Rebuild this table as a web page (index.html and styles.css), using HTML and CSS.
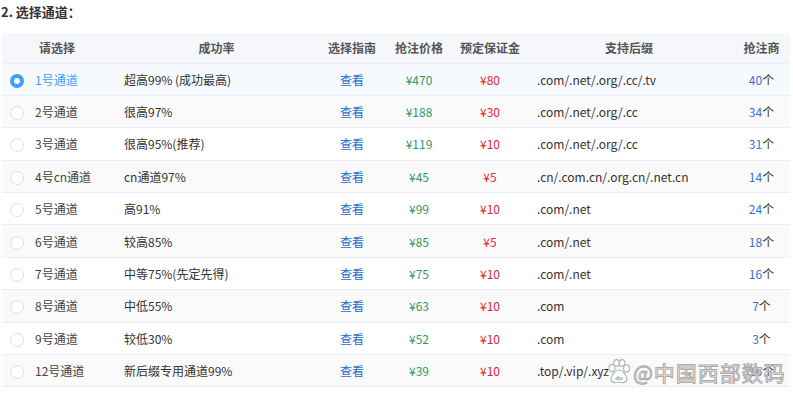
FILE: index.html
```
<!DOCTYPE html>
<html lang="zh">

<head>
    <meta charset="utf-8">
    <title>选择通道</title>
    <link rel="stylesheet" href="styles.css">
</head>

<body>
    <h3 class="titel">2. 选择通道：</h3>

    <table class="kanaler">
        <colgroup>
            <col style="width:110px">
            <col style="width:209px">
            <col style="width:62px">
            <col style="width:72px">
            <col style="width:70px">
            <col style="width:208px">
            <col style="width:57px">
        </colgroup>
        <thead>
            <tr>
                <th>请选择</th>
                <th>成功率</th>
                <th>选择指南</th>
                <th>抢注价格</th>
                <th>预定保证金</th>
                <th>支持后缀</th>
                <th>抢注商</th>
            </tr>
        </thead>
        <tbody>
            <tr class="valgt">
                <td class="vaelg"><span class="radio on"></span>1号通道</td>
                <td class="venstre">超高99% (成功最高)</td>
                <td><a href="#">查看</a></td>
                <td class="pris">¥470</td>
                <td class="depo">¥80</td>
                <td class="venstre">.com/.net/.org/.cc/.tv</td>
                <td><span class="antal">40</span>个</td>
            </tr>
            <tr>
                <td class="vaelg"><span class="radio"></span>2号通道</td>
                <td class="venstre">很高97%</td>
                <td><a href="#">查看</a></td>
                <td class="pris">¥188</td>
                <td class="depo">¥30</td>
                <td class="venstre">.com/.net/.org/.cc</td>
                <td><span class="antal">34</span>个</td>
            </tr>
            <tr>
                <td class="vaelg"><span class="radio"></span>3号通道</td>
                <td class="venstre">很高95%(推荐)</td>
                <td><a href="#">查看</a></td>
                <td class="pris">¥119</td>
                <td class="depo">¥10</td>
                <td class="venstre">.com/.net/.org/.cc</td>
                <td><span class="antal">31</span>个</td>
            </tr>
            <tr>
                <td class="vaelg"><span class="radio"></span>4号cn通道</td>
                <td class="venstre">cn通道97%</td>
                <td><a href="#">查看</a></td>
                <td class="pris">¥45</td>
                <td class="depo">¥5</td>
                <td class="venstre">.cn/.com.cn/.org.cn/.net.cn</td>
                <td><span class="antal">14</span>个</td>
            </tr>
            <tr>
                <td class="vaelg"><span class="radio"></span>5号通道</td>
                <td class="venstre">高91%</td>
                <td><a href="#">查看</a></td>
                <td class="pris">¥99</td>
                <td class="depo">¥10</td>
                <td class="venstre">.com/.net</td>
                <td><span class="antal">24</span>个</td>
            </tr>
            <tr>
                <td class="vaelg"><span class="radio"></span>6号通道</td>
                <td class="venstre">较高85%</td>
                <td><a href="#">查看</a></td>
                <td class="pris">¥85</td>
                <td class="depo">¥5</td>
                <td class="venstre">.com/.net</td>
                <td><span class="antal">18</span>个</td>
            </tr>
            <tr>
                <td class="vaelg"><span class="radio"></span>7号通道</td>
                <td class="venstre">中等75%(先定先得)</td>
                <td><a href="#">查看</a></td>
                <td class="pris">¥75</td>
                <td class="depo">¥10</td>
                <td class="venstre">.com/.net</td>
                <td><span class="antal">16</span>个</td>
            </tr>
            <tr>
                <td class="vaelg"><span class="radio"></span>8号通道</td>
                <td class="venstre">中低55%</td>
                <td><a href="#">查看</a></td>
                <td class="pris">¥63</td>
                <td class="depo">¥10</td>
                <td class="venstre">.com</td>
                <td><span class="antal">7</span>个</td>
            </tr>
            <tr>
                <td class="vaelg"><span class="radio"></span>9号通道</td>
                <td class="venstre">较低30%</td>
                <td><a href="#">查看</a></td>
                <td class="pris">¥52</td>
                <td class="depo">¥10</td>
                <td class="venstre">.com</td>
                <td><span class="antal">3</span>个</td>
            </tr>
            <tr>
                <td class="vaelg"><span class="radio"></span>12号通道</td>
                <td class="venstre">新后缀专用通道99%</td>
                <td><a href="#">查看</a></td>
                <td class="pris">¥39</td>
                <td class="depo">¥10</td>
                <td class="venstre">.top/.vip/.xyz</td>
                <td><span class="antal">16</span>个</td>
            </tr>
        </tbody>
    </table>

    <!-- vandmaerke -->
    <div class="maerke">
        <svg width="24" height="26" viewBox="0 0 24 26">
            <g fill="rgba(255,255,255,0.6)" stroke="#b5b5b5" stroke-width="1.2">
                <ellipse cx="5" cy="9" rx="3" ry="3.6" />
                <ellipse cx="9.5" cy="4" rx="2.8" ry="3.4" />
                <ellipse cx="15" cy="4" rx="2.8" ry="3.4" />
                <ellipse cx="19.5" cy="9.5" rx="3" ry="3.6" />
                <path d="M12 11 C8 11 4 17 4 20 C4 24 8 24 12 23 C16 24 20 24 20 20 C20 17 16 11 12 11 Z" />
            </g>
            <text x="12" y="21" font-size="6" text-anchor="middle" fill="#999" font-family="Liberation Sans, sans-serif" font-weight="bold">du</text>
        </svg>
        <span>@中国西部数码</span>
    </div>
</body>

</html>
```

FILE: styles.css
```
* {
    margin: 0;
    padding: 0;
    box-sizing: border-box;
}

body {
    font-family: "Noto Sans CJK SC", "Noto Sans", sans-serif;
    font-size: 12px;
    color: #333;
    background: #fff;
    position: relative;
}

.titel {
    font-size: 13px;
    font-weight: bold;
    color: #333;
    line-height: 20px;
    padding: 2px 0 0 1px;
    height: 33px;
}

/* Tabel */
.kanaler {
    margin: 0 2px;
    width: 788px;
    table-layout: fixed;
    border-collapse: collapse;
}

.kanaler th {
    height: 30px;
    background: #f5f7fa;
    color: #555;
    font-weight: bold;
    font-size: 12px;
    text-align: center;
    border-bottom: 1px solid #ebeef5;
}

.kanaler td {
    height: 32.4px;
    text-align: center;
    border-bottom: 1px solid #ebeef5;
    white-space: nowrap;
}

.kanaler tbody tr:nth-child(even) {
    background: #fafafa;
}

.kanaler tbody tr.valgt {
    background: #f6f9fd;
}

.kanaler td.venstre {
    text-align: left;
    padding-left: 12px;
}

.kanaler td.vaelg {
    text-align: left;
    padding-left: 8px;
    color: #444;
}

.valgt td.vaelg {
    color: #409eff;
}

/* Radio knap */
.radio {
    display: inline-block;
    width: 14px;
    height: 14px;
    border: 1px solid #dcdfe6;
    border-radius: 50%;
    background: #fff;
    vertical-align: -3px;
    margin-right: 11px;
}

.radio.on {
    border: 4px solid #409eff;
    background: #fff;
}

a {
    color: #1e6fc8;
    text-decoration: none;
}

.pris {
    color: #2f9a68;
}

.depo {
    color: #e8262f;
}

.antal {
    color: #3c6fd6;
}

/* Vandmaerke */
.maerke {
    position: absolute;
    left: 607px;
    top: 357px;
    display: flex;
    align-items: center;
    gap: 2px;
}

.maerke span {
    font-size: 21px;
    color: rgba(255, 255, 255, 0.7);
    -webkit-text-stroke: 1px #aaa;
    letter-spacing: 1px;
}
```
